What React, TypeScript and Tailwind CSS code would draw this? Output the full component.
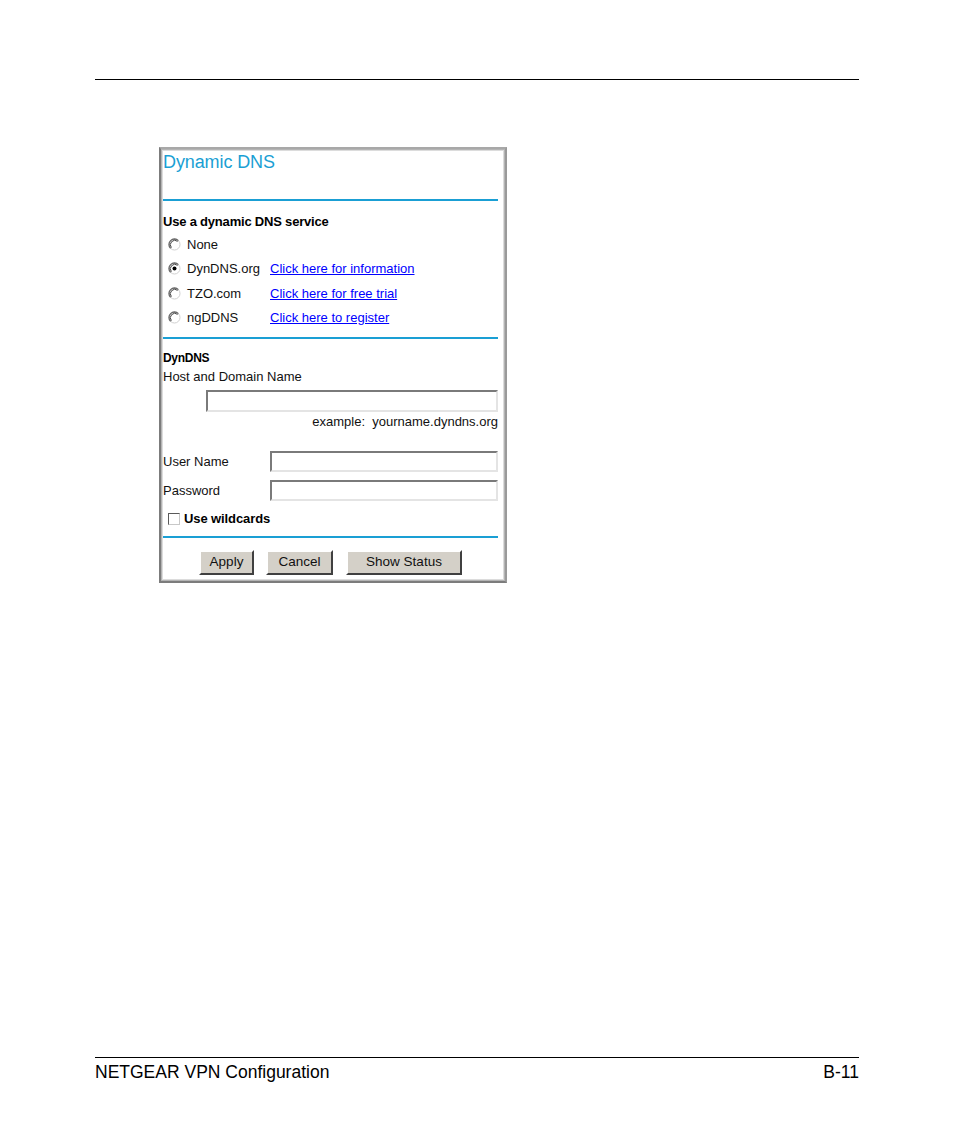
import React from 'react';

const Radio: React.FC<{ checked?: boolean }> = ({ checked }) => (
  <svg width="13" height="13" viewBox="0 0 13 13" className="shrink-0">
    <circle cx="6.5" cy="6.5" r="5.5" fill="#ffffff" stroke="#d0d0d0" strokeWidth="1" />
    <path d="M2.6 10.4 A5.5 5.5 0 0 1 10.4 2.6" fill="none" stroke="#6a6a6a" strokeWidth="1.3" />
    <path d="M3.4 9.6 A4.4 4.4 0 0 1 9.6 3.4" fill="none" stroke="#303030" strokeWidth="0.9" />
    {checked && <circle cx="6.5" cy="6.5" r="2" fill="#000000" />}
  </svg>
);

const Rule = ({ className = '' }: { className?: string }) => (
  <div className={`h-[2px] bg-[#1a9fd4] ${className}`} />
);

const TextBox = ({ className = '' }: { className?: string }) => (
  <div
    className={`border-2 border-t-[#7a7a7a] border-l-[#7a7a7a] border-b-[#e4e4e4] border-r-[#e4e4e4] bg-white ${className}`}
  />
);

const Btn = ({ label, className = '' }: { label: string; className?: string }) => (
  <div
    className={`h-[25px] flex items-center justify-center bg-[#d4d0c8] border-2 border-t-[#ffffff] border-l-[#ffffff] border-b-[#404040] border-r-[#404040] text-[13.5px] text-[#111] ${className}`}
  >
    {label}
  </div>
);

const options = [
  { name: 'None', link: '' },
  { name: 'DynDNS.org', link: 'Click here for information', checked: true },
  { name: 'TZO.com', link: 'Click here for free trial' },
  { name: 'ngDDNS', link: 'Click here to register' },
];

export default function App() {
  return (
    <div className="w-[954px] h-[1145px] bg-white flex flex-col font-['Liberation_Sans',Arial,sans-serif] text-black">
      {/* header rule */}
      <div className="mt-[79px] mx-[95px] h-px bg-black" />

      {/* screenshot panel */}
      <div className="mt-[67px] ml-[159px] w-[348px] h-[436px] border-2 border-[#7c7c7c] border-t-[#a8a8a8] border-r-[#9a9a9a] shadow-[inset_0_0_0_1px_#b4b4b4,inset_0_0_0_2px_#dcdcdc] bg-white">
        <div className="pl-[2px] pr-[7px] flex flex-col">
          <div className="mt-[3px] h-[20px] text-[18px] leading-[20px] text-[#1a9fd4] tracking-[-0.1px]">Dynamic DNS</div>
          <Rule className="mt-[27px]" />

          <div className="mt-[13px] h-[16px] leading-[16px] text-[13px] font-bold tracking-[-0.2px]">
            Use a dynamic DNS service
          </div>

          <div className="mt-[2px] flex flex-col">
            {options.map(o => (
              <div key={o.name} className="h-[24.5px] flex items-center text-[13px]">
                <div className="w-[24px] pl-[5px] flex items-center">
                  <Radio checked={o.checked} />
                </div>
                <span className="w-[83px] text-[#111]">{o.name}</span>
                {o.link && <span className="text-[#0000ff] underline">{o.link}</span>}
              </div>
            ))}
          </div>

          <Rule className="mt-[7px]" />

          <div className="mt-[12px] h-[14px] leading-[14px] text-[12px] font-bold tracking-[-0.3px]">DynDNS</div>
          <div className="mt-[4px] h-[16px] leading-[16px] text-[13px] text-[#111]">Host and Domain Name</div>
          <TextBox className="mt-[5px] ml-[43px] h-[22px]" />
          <div className="mt-[3px] h-[14px] leading-[14px] text-[13px] text-right text-[#111] whitespace-pre">
            example:  yourname.dyndns.org
          </div>

          <div className="mt-[22px] flex items-center h-[21px]">
            <span className="w-[107px] text-[13px] text-[#111]">User Name</span>
            <TextBox className="flex-1 h-[21px]" />
          </div>
          <div className="mt-[8px] flex items-center h-[21px]">
            <span className="w-[107px] text-[13px] text-[#111]">Password</span>
            <TextBox className="flex-1 h-[21px]" />
          </div>

          <div className="mt-[10px] h-[16px] flex items-center">
            <div className="ml-[5px] w-[12px] h-[12px] border border-t-[#5a5a5a] border-l-[#5a5a5a] border-b-[#c8c8c8] border-r-[#c8c8c8] bg-white" />
            <span className="ml-[4px] text-[13px] font-bold tracking-[-0.1px]">Use wildcards</span>
          </div>

          <Rule className="mt-[9px]" />

          <div className="mt-[12px] flex">
            <Btn label="Apply" className="ml-[36px] w-[55px]" />
            <Btn label="Cancel" className="ml-[12px] w-[67px]" />
            <Btn label="Show Status" className="ml-[13px] w-[116px]" />
          </div>
        </div>
      </div>

      {/* footer */}
      <div className="mt-auto mb-[63px] mx-[95px]">
        <div className="h-px bg-black" />
        <div className="mt-[4px] flex justify-between text-[17.5px] leading-[20px] text-black">
          <span>NETGEAR VPN Configuration</span>
          <span>B-11</span>
        </div>
      </div>
    </div>
  );
}
